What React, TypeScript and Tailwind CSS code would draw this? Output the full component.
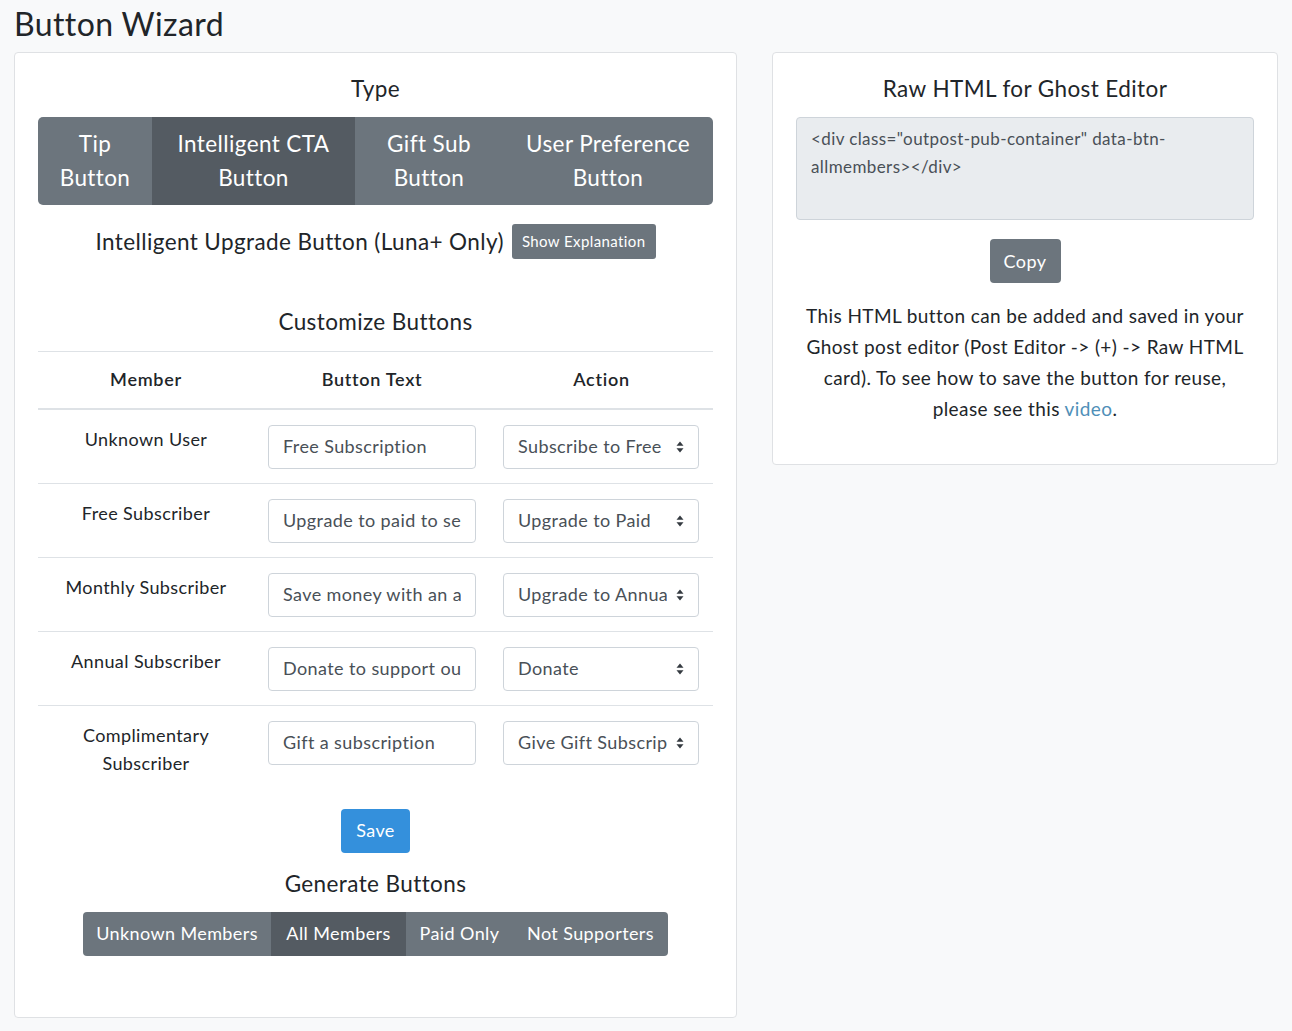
import React from 'react'

const FONT = { fontFamily: 'Lato, "Open Sans", sans-serif' }

function UpDown() {
  return (
    <svg width="8" height="12" viewBox="0 0 8 12" className="shrink-0">
      <path d="M4 0.5 L7.5 4.8 H0.5 Z" fill="#343a40" />
      <path d="M4 11.5 L7.5 7.2 H0.5 Z" fill="#343a40" />
    </svg>
  )
}

const rows = [
  { member: ['Unknown User'], text: 'Free Subscription', action: 'Subscribe to Free' },
  { member: ['Free Subscriber'], text: 'Upgrade to paid to see', action: 'Upgrade to Paid' },
  { member: ['Monthly Subscriber'], text: 'Save money with an annual', action: 'Upgrade to Annual' },
  { member: ['Annual Subscriber'], text: 'Donate to support our work', action: 'Donate' },
  { member: ['Complimentary', 'Subscriber'], text: 'Gift a subscription', action: 'Give Gift Subscription' },
]

export default function App() {
  return (
    <div className="min-h-[1031px] bg-[#f8f9fa] tracking-[0.025em] text-[#212529]" style={FONT}>
      <h2 className="px-[14px] pt-[4px] text-[32px] leading-[40px]">Button Wizard</h2>
      <div className="mt-[8px] flex items-start gap-[35px] px-[14px]">
        {/* left card */}
        <section className="w-[723px] rounded-[4px] border border-[#dfe1e4] bg-white px-[23px] pt-[23px] pb-[61px]">
          <h5 className="text-center text-[22.5px] leading-[26px]">Type</h5>
          <div className="mt-[15px] flex h-[88px] overflow-hidden rounded-[5px] text-[22.5px] leading-[34px] text-white">
            <div className="flex w-[114px] items-center justify-center bg-[#6c757d] text-center">Tip<br />Button</div>
            <div className="flex w-[203px] items-center justify-center bg-[#545b62] text-center">Intelligent CTA<br />Button</div>
            <div className="flex w-[148px] items-center justify-center bg-[#6c757d] text-center">Gift Sub<br />Button</div>
            <div className="flex flex-1 items-center justify-center bg-[#6c757d] text-center">User Preference<br />Button</div>
          </div>
          <div className="mt-[19px] flex items-center justify-center gap-[8px]">
            <span className="text-[22.5px] leading-[30px]">Intelligent Upgrade Button (Luna+ Only)</span>
            <button className="h-[35px] rounded-[3px] bg-[#6c757d] px-[10px] text-[15px] text-white">Show Explanation</button>
          </div>
          <h5 className="mt-[49px] text-center text-[22.5px] leading-[28px]">Customize Buttons</h5>
          <table className="mt-[15px] w-full table-fixed border-collapse text-[18px]">
            <colgroup>
              <col className="w-[216px]" />
              <col className="w-[236px]" />
              <col className="w-[223px]" />
            </colgroup>
            <thead>
              <tr className="border-t border-b-2 border-[#dee2e6]">
                <th className="h-[57px] text-center font-semibold tracking-[0.04em]">Member</th>
                <th className="text-center font-semibold tracking-[0.04em]">Button Text</th>
                <th className="text-center font-semibold tracking-[0.04em]">Action</th>
              </tr>
            </thead>
            <tbody>
              {rows.map((r, i) => (
                <tr key={r.action} className={i < rows.length - 1 ? 'border-b border-[#dee2e6]' : ''}>
                  <td className="px-[14px] pt-[15px] pb-[14px] align-top text-center leading-[28px]">
                    {r.member.map((m) => (
                      <div key={m}>{m}</div>
                    ))}
                  </td>
                  <td className="px-[14px] pt-[15px] pb-[14px] align-top">
                    <div className="flex h-[44px] items-center rounded-[4px] border border-[#ced4da] px-[14px] text-[#495057]">
                      <span className="min-w-0 flex-1 overflow-hidden whitespace-nowrap">{r.text}</span>
                    </div>
                  </td>
                  <td className="pt-[15px] pb-[14px] pr-[14px] pl-[13px] align-top">
                    <div className="flex h-[44px] items-center gap-[9px] rounded-[4px] border border-[#ced4da] pr-[14px] pl-[14px] text-[#495057]">
                      <span className="min-w-0 flex-1 overflow-hidden whitespace-nowrap">{r.action}</span>
                      <UpDown />
                    </div>
                  </td>
                </tr>
              ))}
            </tbody>
          </table>
          <div className="mt-[18px] flex justify-center">
            <button className="h-[44px] w-[69px] rounded-[4px] bg-[#3490dc] text-[18px] text-white">Save</button>
          </div>
          <h5 className="mt-[17px] text-center text-[22.5px] leading-[28px]">Generate Buttons</h5>
          <div className="mt-[14px] flex justify-center">
            <div className="flex h-[44px] overflow-hidden rounded-[4px] text-[18px] text-white">
              <div className="flex w-[188px] items-center justify-center bg-[#6c757d]">Unknown Members</div>
              <div className="flex w-[135px] items-center justify-center bg-[#545b62]">All Members</div>
              <div className="flex w-[107px] items-center justify-center bg-[#6c757d]">Paid Only</div>
              <div className="flex w-[155px] items-center justify-center bg-[#6c757d]">Not Supporters</div>
            </div>
          </div>
        </section>

        {/* right card */}
        <section className="w-[506px] rounded-[4px] border border-[#dfe1e4] bg-white px-[23px] pt-[23px] pb-[40px]">
          <h5 className="text-center text-[22.5px] leading-[26px]">Raw HTML for Ghost Editor</h5>
          <div className="mt-[15px] h-[103px] rounded-[4px] border border-[#ced4da] bg-[#e9ecef] px-[14px] py-[7px] text-[17px] leading-[28px] text-[#495057]">
            &lt;div class="outpost-pub-container" data-btn-allmembers&gt;&lt;/div&gt;
          </div>
          <div className="mt-[19px] flex justify-center">
            <button className="h-[44px] w-[71px] rounded-[4px] bg-[#6c757d] text-[18px] text-white">Copy</button>
          </div>
          <p className="mt-[17px] text-center text-[19px] leading-[31px]">
            This HTML button can be added and saved in your Ghost post editor (Post Editor -&gt; (+) -&gt; Raw HTML card). To see how to save the button for reuse, please see this{' '}
            <a className="text-[#4f8fb8]">video</a>.
          </p>
        </section>
      </div>
    </div>
  )
}
